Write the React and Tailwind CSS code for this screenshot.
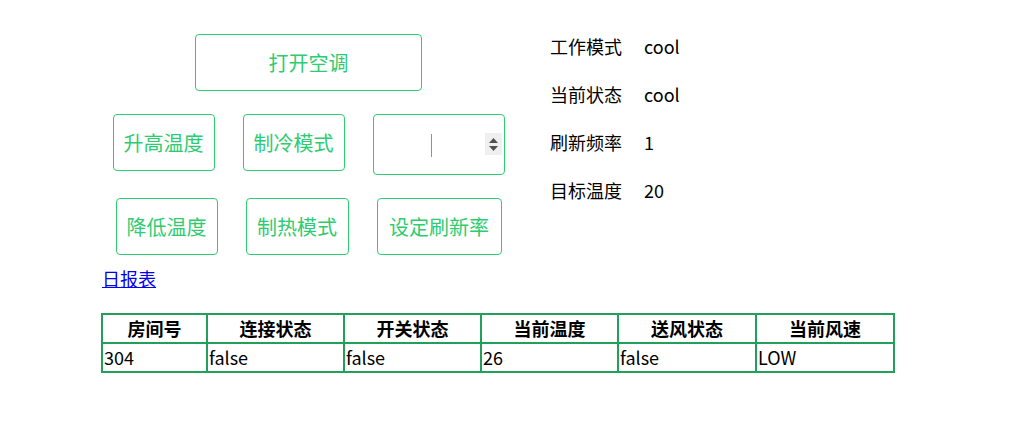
import React from "react";

const font = {
  fontFamily: '"Noto Sans CJK SC", "Noto Sans", sans-serif',
};

function GreenButton({ children, className = "" }) {
  return (
    <button
      className={
        "h-[57px] rounded-[4px] border border-[#2ecc71] bg-white px-[9px] text-[20px] leading-none text-[#2ecc71] " +
        className
      }
    >
      {children}
    </button>
  );
}

function RateInput() {
  return (
    <div className="relative h-[61px] w-[132px] rounded-[4px] border border-[#2ecc71] bg-white">
      {/* caret */}
      <span className="absolute left-[57px] top-[19px] h-[23px] w-px bg-[#2ecc71]" />
      {/* spinner */}
      <span className="absolute left-[111px] top-[18px] flex h-[22px] w-[17px] flex-col items-center justify-center gap-[3px] bg-[#efefef]">
        <svg width="9" height="5" viewBox="0 0 9 5">
          <path d="M4.5 0 L9 5 L0 5 Z" fill="#505050" />
        </svg>
        <svg width="9" height="5" viewBox="0 0 9 5">
          <path d="M0 0 L9 0 L4.5 5 Z" fill="#505050" />
        </svg>
      </span>
    </div>
  );
}

const status = [
  ["工作模式", "cool"],
  ["当前状态", "cool"],
  ["刷新频率", "1"],
  ["目标温度", "20"],
];

const headers = ["房间号", "连接状态", "开关状态", "当前温度", "送风状态", "当前风速"];
const row = ["304", "false", "false", "26", "false", "LOW"];

export default function App() {
  return (
    <div className="h-[430px] w-[1031px] bg-white pl-[102px] text-black" style={font}>
      {/* Controls + status */}
      <div className="flex pt-[34px]">
        <div className="flex w-[413px] flex-col gap-[23px]">
          <div className="flex justify-center">
            <GreenButton className="w-[227px]">打开空调</GreenButton>
          </div>
          <div className="flex items-start justify-center gap-[28px]">
            <GreenButton className="w-[102px]">升高温度</GreenButton>
            <GreenButton className="w-[102px]">制冷模式</GreenButton>
            <RateInput />
          </div>
          <div className="flex justify-center gap-[28px]">
            <GreenButton className="w-[102px]">降低温度</GreenButton>
            <GreenButton className="w-[103px]">制热模式</GreenButton>
            <GreenButton className="w-[125px]">设定刷新率</GreenButton>
          </div>
        </div>

        <div className="-mt-[12px] ml-[35px] flex flex-col">
          {status.map(([label, value]) => (
            <div key={label} className="flex h-[48px] items-center text-[18px]">
              <span className="w-[94px]">{label}</span>
              <span>{value}</span>
            </div>
          ))}
        </div>
      </div>

      {/* Link */}
      <div className="mt-[11px] h-[24px]">
        <a href="#" className="text-[18px] leading-[24px] text-[#0000ee] underline">
          日报表
        </a>
      </div>

      {/* Table */}
      <table className="-ml-px mt-[23px] w-[792px] table-fixed border-collapse border-2 border-[#21a05a] text-[18px]">
        <colgroup>
          <col className="w-[105px]" />
          <col className="w-[137px]" />
          <col className="w-[137px]" />
          <col className="w-[137px]" />
          <col className="w-[138px]" />
          <col className="w-[138px]" />
        </colgroup>
        <thead>
          <tr className="h-[29px]">
            {headers.map((h) => (
              <th key={h} className="border-2 border-[#21a05a] p-0 text-center font-bold leading-[25px]">
                {h}
              </th>
            ))}
          </tr>
        </thead>
        <tbody>
          <tr className="h-[29px]">
            {row.map((c, i) => (
              <td key={i} className="border-2 border-[#21a05a] px-[1px] py-0 text-left leading-[25px]">
                {c}
              </td>
            ))}
          </tr>
        </tbody>
      </table>
    </div>
  );
}
